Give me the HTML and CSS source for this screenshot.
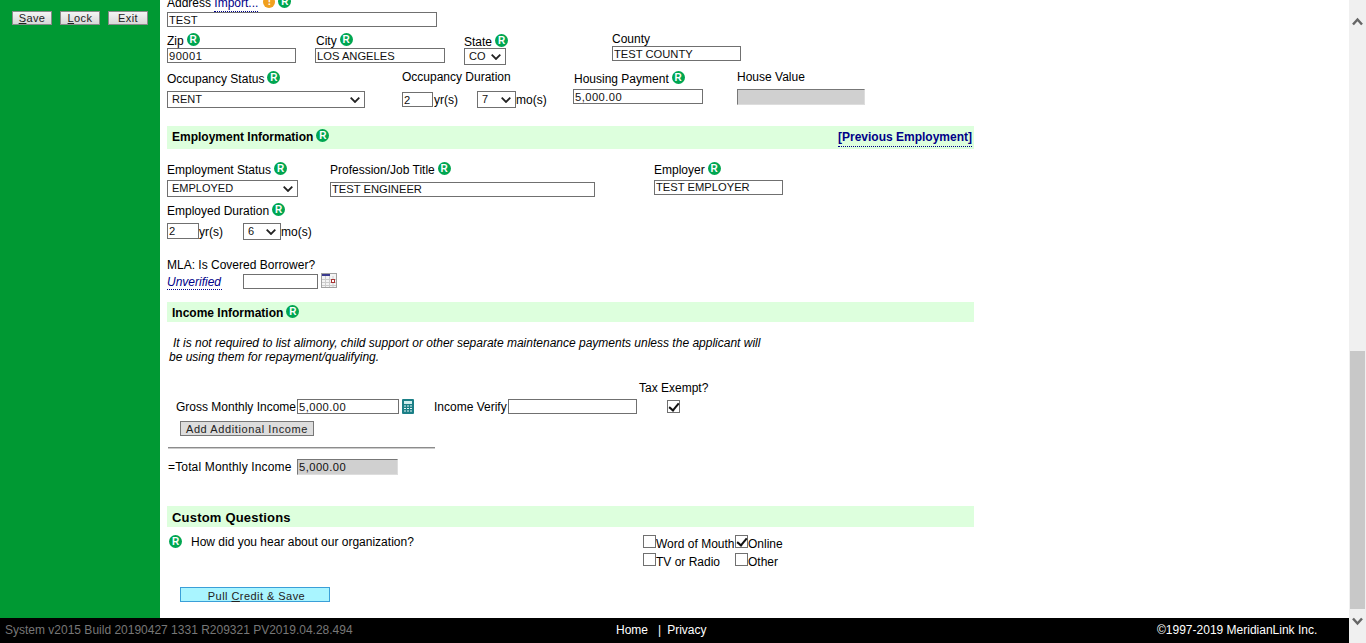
FILE: index.html
```html
<!DOCTYPE html>
<html>
	<head>
		<meta charset="UTF-8">
		<title>Application</title>
		<link rel="stylesheet" href="styles.css">
	</head>
	<body>
		<div class="app">
			<div class="page">
				<div class="main">

					<!--左侧按钮-->
					<div class="side">
						<button class="sideBtn"><u>S</u>ave</button>
						<button class="sideBtn"><u>L</u>ock</button>
						<button class="sideBtn">Exit</button>
					</div>

					<div class="content">

						<!--地址-->
						<div class="lbl addrLbl">Address <a class="lnk">Import...</a><span class="warn">!</span><span class="rq">R</span></div>
						<input class="txt addrInput" type="text" value="TEST">

						<div class="row rowCity">
							<div class="fld fldZip">
								<div class="lbl">Zip<span class="rq">R</span></div>
								<input class="txt num w129" type="text" value="90001">
							</div>
							<div class="fld fldCity">
								<div class="lbl">City<span class="rq">R</span></div>
								<input class="txt w130 nudgeL" type="text" value="LOS ANGELES">
							</div>
							<div class="fld fldState">
								<div class="lbl">State<span class="rq">R</span></div>
								<select class="sel w42"><option>CO</option></select>
							</div>
							<div class="fld">
								<div class="lbl">County</div>
								<input class="txt w129" type="text" value="TEST COUNTY">
							</div>
						</div>

						<div class="row rowHousing">
							<div class="fld fldOcc">
								<div class="lbl">Occupancy Status<span class="rq">R</span></div>
								<select class="sel w198 gapSel"><option>RENT</option></select>
							</div>
							<div class="fld fldDur">
								<div class="lbl">Occupancy Duration</div>
								<div class="dur durOcc">
									<input class="txt num w31" type="text" value="2">
									<span class="unit unitYr">yr(s)</span>
									<select class="sel w39"><option>7</option></select>
									<span class="unit">mo(s)</span>
								</div>
							</div>
							<div class="fld fldPay">
								<div class="lbl">Housing Payment<span class="rq">R</span></div>
								<input class="txt num w130 gapPay nudgeL" type="text" value="5,000.00">
							</div>
							<div class="fld">
								<div class="lbl">House Value</div>
								<input class="txt off w128 gapVal" type="text">
							</div>
						</div>

						<!--工作信息-->
						<div class="band bandEmp">
							<b>Employment Information<span class="rq">R</span></b>
							<a class="lnk lnkBold">[Previous Employment]</a>
						</div>

						<div class="row rowEmp">
							<div class="fld fldStatus">
								<div class="lbl">Employment Status<span class="rq">R</span></div>
								<select class="sel w131"><option>EMPLOYED</option></select>
							</div>
							<div class="fld fldJob">
								<div class="lbl">Profession/Job Title<span class="rq">R</span></div>
								<input class="txt w265 gapJob" type="text" value="TEST ENGINEER">
							</div>
							<div class="fld fldEmployer">
								<div class="lbl">Employer<span class="rq">R</span></div>
								<input class="txt w129" type="text" value="TEST EMPLOYER">
							</div>
						</div>

						<div class="lbl">Employed Duration<span class="rq">R</span></div>
						<div class="dur durEmp">
							<input class="txt num w32" type="text" value="2">
							<span class="unit unitYr2">yr(s)</span>
							<select class="sel w38"><option>6</option></select>
							<span class="unit">mo(s)</span>
						</div>

						<div class="lbl mlaLbl">MLA: Is Covered Borrower?</div>
						<div class="mla">
							<a class="lnk mlaLnk">Unverified</a>
							<input class="txt w75" type="text">
							<svg class="calIcon" width="16" height="15" viewBox="0 0 16 15">
								<rect x="0.5" y="0.5" width="15" height="14" fill="#f4f4f4" stroke="#a0a0a0"/>
								<rect x="1" y="1" width="8" height="2" fill="#3b3b8f"/>
								<path d="M1 6.500h14M1 9.500h14M1 12.500h14M4.500 3v11M8.500 3v11M12 3v11" stroke="#cccccc" fill="none"/>
								<rect x="10.500" y="6.500" width="3" height="3" fill="#fff" stroke="#a33"/>
							</svg>
						</div>

						<!--收入信息-->
						<div class="band bandInc">
							<b>Income Information<span class="rq">R</span></b>
						</div>
						<p class="note">It is not required to list alimony, child support or other separate maintenance payments unless the applicant will<br>be using them for repayment/qualifying.</p>
						<div class="lbl taxLbl">Tax Exempt?</div>

						<div class="grossRow">
							<span class="grossLbl">Gross Monthly Income</span>
							<input class="txt num w102" type="text" value="5,000.00">
							<svg class="calcIcon" width="12" height="15" viewBox="0 0 12 15">
								<rect width="12" height="15" rx="1" fill="#1b7f86"/>
								<rect x="2" y="2" width="8" height="3" fill="#cfeeee"/>
								<path d="M2 7h2M5 7h2M8 7h2M2 9.500h2M5 9.500h2M8 9.500h2M2 12h2M5 12h2M8 12h2" stroke="#e4f6f6" stroke-width="1.200"/>
							</svg>
							<span class="verifyLbl">Income Verify</span>
							<input class="txt w129" type="text">
							<input class="chk taxChk" type="checkbox" checked>
						</div>

						<button class="grayBtn">Add Additional Income</button>
						<div class="sumLine"></div>

						<div class="totalRow">
							<span class="totalLbl">=Total Monthly Income</span>
							<input class="txt num off w101" type="text" value="5,000.00">
						</div>

						<!--自定义问题-->
						<div class="band bandCustom">
							<b class="customTitle">Custom Questions</b>
						</div>

						<div class="question">
							<span class="rq rqFirst">R</span>
							<span class="qText">How did you hear about our organization?</span>
							<div class="answers">
								<label class="opt"><input class="chk" type="checkbox">Word of Mouth</label>
								<label class="opt"><input class="chk" type="checkbox" checked>Online</label>
								<label class="opt"><input class="chk" type="checkbox">TV or Radio</label>
								<label class="opt"><input class="chk" type="checkbox">Other</label>
							</div>
						</div>

						<button class="pullBtn">Pull <u>C</u>redit &amp; Save</button>
					</div>
				</div>

				<!--底部-->
				<div class="foot">
					<span class="build">System v2015 Build 20190427 1331 R209321 PV2019.04.28.494</span>
					<span class="footLinks"><a>Home</a><span class="bar">|</span><a>Privacy</a></span>
					<span class="copy">©1997-2019 MeridianLink Inc.</span>
				</div>
			</div>

			<!--滚动条-->
			<div class="scroll">
				<svg class="arrowUp" width="11" height="9" viewBox="0 0 11 9"><path d="M1 7.500l4.500-5 4.500 5" fill="none" stroke="#666" stroke-width="2.500"/></svg>
				<div class="thumb"></div>
				<svg class="arrowDown" width="11" height="9" viewBox="0 0 11 9"><path d="M1 1.500l4.500 5 4.500-5" fill="none" stroke="#666" stroke-width="2.500"/></svg>
			</div>
		</div>
	</body>
</html>
```

FILE: styles.css
```css
*{
	margin: 0;
	padding: 0;
	box-sizing: border-box;
}

body{
	overflow: hidden;
	background-color: #fff;
	color: #000;
	font: 12px/14px "Liberation Sans", Arial, sans-serif;
}

.app{
	display: flex;
	height: 643px;
}

.page{
	flex: 1;
	display: flex;
	flex-direction: column;
	min-width: 0;
}

.main{
	flex: 1;
	display: flex;
	min-height: 0;
}

/* 左侧 */
.side{
	width: 160px;
	background-color: #009933;
	display: flex;
	align-items: flex-start;
	gap: 8px;
	padding: 11px 12px 0;
}

.sideBtn{
	width: 40px;
	height: 14px;
	border: 1px solid #8a8a8a;
	background: linear-gradient(#f4f4f4, #d8d8d8);
	font: 11px/12px "Liberation Sans", Arial, sans-serif;
	letter-spacing: 0.4px;
	color: #222;
}

.content{
	flex: 1;
	overflow: hidden;
	padding-left: 7px;
}

/* 控件 */
.txt{
	display: block;
	height: 15px;
	border: 1px solid #707070;
	padding: 0 1px;
	background-color: #fff;
	color: #111;
	font: 11.200px/13px "Liberation Sans", Arial, sans-serif;
}

.num{
	letter-spacing: 0.45px;
}

.off{
	height: 16px;
	background-color: #d0d0d0;
	border-color: #777 #ddd #ddd #777;
}

.sel{
	appearance: none;
	-webkit-appearance: none;
	display: block;
	height: 17px;
	padding-left: 4px;
	border: 1px solid #707070;
	background: #fff url("data:image/svg+xml,%3Csvg xmlns='http://www.w3.org/2000/svg' width='10' height='6'%3E%3Cpath d='M.7.7 5 5 9.300.7' fill='none' stroke='%23222' stroke-width='1.800'/%3E%3C/svg%3E") no-repeat right 4px center;
	color: #111;
	font: 11px/15px "Liberation Sans", Arial, sans-serif;
}

.w31{ width: 31px; }
.w32{ width: 32px; height: 16px; }
.w38{ width: 38px; }
.w39{ width: 39px; }
.w42{ width: 42px; }
.w75{ width: 75px; }
.w101{ width: 101px; }
.w102{ width: 102px; }
.w128{ width: 128px; }
.w129{ width: 129px; }
.w130{ width: 130px; }
.w131{ width: 131px; }
.w198{ width: 198px; }
.w265{ width: 265px; }

.nudgeL{ margin-left: -1px; }

.lbl{
	height: 14px;
	white-space: nowrap;
}

/* 负的margin让图标不撑高行 */
.rq,
.warn{
	display: inline-block;
	width: 13px;
	height: 13px;
	border-radius: 50%;
	margin-top: -2px;
	margin-left: 3px;
	background-color: #00a651;
	color: #fff;
	font: bold 10px/13px "Liberation Sans", Arial, sans-serif;
	text-align: center;
	vertical-align: 2px;
}

.warn{
	width: 12px;
	height: 12px;
	margin-left: 5px;
	background-color: #f0a01e;
	line-height: 12px;
}

.lnk{
	color: #000088;
	padding-bottom: 1px;
	border-bottom: 1px dotted #000088;
}

.lnkBold{
	margin-top: 2px;
	font-weight: bold;
	padding-bottom: 2px;
}

/* 行 */
.row{
	display: flex;
	align-items: flex-start;
}

.addrLbl{
	margin-top: -4px;
}

.addrInput{
	width: 270px;
	margin-top: 2px;
}

.rowCity{
	height: 38px;
	margin-top: 5px;
}

.fldZip,
.fldCity{
	padding-top: 2px;
}

.fldState{
	padding-top: 3px;
}

.fldState .lbl{
	height: 13px;
}

.fldZip{ width: 149px; }
.fldCity{ width: 148px; }
.fldState{ width: 148px; }

.rowHousing{
	height: 56px;
}

.rowHousing .fldOcc,
.rowHousing .fldPay{
	padding-top: 2px;
}

.fldOcc{ width: 235px; }
.fldDur{ width: 172px; }
.fldPay{ width: 163px; }

.gapSel{ margin-top: 5px; }
.gapPay{ margin-top: 3px; }
.gapVal{ margin-top: 5px; }

.dur{
	display: flex;
	align-items: flex-start;
}

.durOcc{ margin-top: 7px; }

.durOcc .txt{ margin-top: 1px; }

.unit{
	padding-top: 2px;
	line-height: 14px;
}

.unitYr{ width: 44px; padding-left: 1px; }
.unitYr2{ width: 44px; }

/* 绿色标题 */
.band{
	width: 807px;
	display: flex;
	align-items: center;
	justify-content: space-between;
	padding: 0 2px 0 5px;
	background-color: #ddffdd;
	white-space: nowrap;
}

.bandEmp{ height: 23px; }
.bandInc{ height: 20px; margin-top: 13px; }
.bandCustom{ height: 21px; margin-top: 31px; }

.bandEmp b{ margin-top: -2px; }
.bandInc b,
.bandCustom b{ margin-top: 2px; }

.customTitle{
	font-size: 13px;
	letter-spacing: 0.2px;
}

.rowEmp{
	height: 42px;
	margin-top: 13px;
}

.rowEmp .txt{
	padding-bottom: 2px;
}

.fldStatus{
	width: 163px;
	padding-top: 1px;
}

.fldJob{
	width: 324px;
	padding-top: 1px;
}

.fldEmployer{
	padding-top: 1px;
}

.fldStatus .sel{ margin-top: 3px; }
.gapJob{ margin-top: 5px; }
.fldEmployer .txt{ margin-top: 3px; }

.durEmp{
	margin-top: 5px;
}

.mlaLbl{
	margin-top: 18px;
}

.mla{
	display: flex;
	align-items: flex-start;
	height: 15px;
	margin-top: 2px;
}

.mlaLnk{
	width: 55px;
	height: 15px;
	margin-right: 21px;
	margin-top: 1px;
	font-style: italic;
}

.calIcon{
	margin: -1px 0 0 3px;
}

/* 收入 */
.note{
	margin-top: 14px;
	padding-left: 2px;
	text-indent: 4px;
	font-style: italic;
	white-space: nowrap;
}

.taxLbl{
	margin: 17px 0 0 472px;
}

.grossRow{
	display: flex;
	align-items: center;
	height: 15px;
	margin-top: 4px;
	padding-left: 9px;
}

.grossLbl{ width: 121px; }

.calcIcon{ margin-left: 3px; }

.verifyLbl{
	width: 74px;
	margin-left: 20px;
}

.chk{
	appearance: none;
	-webkit-appearance: none;
	display: block;
	position: relative;
	flex: none;
	width: 13px;
	height: 13px;
	border: 1px solid #707070;
	background-color: #fff;
}

/* 勾选标记 */
.chk:checked::after{
	content: "";
	position: absolute;
	left: 3px;
	top: 0;
	width: 4px;
	height: 8px;
	border: solid #111;
	border-width: 0 2px 2px 0;
	transform: rotate(40deg);
}

.taxChk{ margin-left: 30px; }

.grayBtn{
	display: block;
	width: 134px;
	height: 15px;
	margin: 7px 0 0 13px;
	padding-top: 1px;
	border: 1px solid #777;
	background-color: #ddd;
	color: #222;
	font: 11px/13px "Liberation Sans", Arial, sans-serif;
	letter-spacing: 0.6px;
}

.sumLine{
	width: 267px;
	height: 2px;
	margin: 11px 0 0 1px;
	background-color: #8c8c8c;
	border-bottom: 1px solid #ccc;
}

.totalRow{
	display: flex;
	align-items: center;
	height: 16px;
	margin-top: 10px;
}

.totalLbl{
	width: 130px;
	padding-left: 1px;
	letter-spacing: 0.15px;
}

/* 问题 */
.question{
	display: flex;
	align-items: flex-start;
	height: 36px;
	margin-top: 8px;
}

.rqFirst{
	flex: none;
	margin: 0 0 0 2px;
}

.qText{
	width: 452px;
	margin-left: 9px;
}

.answers{
	display: grid;
	grid-template-columns: 92px 92px;
	grid-auto-rows: 18px;
}

.opt{
	display: flex;
	align-items: flex-start;
	white-space: nowrap;
	line-height: 18px;
}

.pullBtn{
	display: block;
	width: 150px;
	height: 15px;
	margin: 16px 0 0 13px;
	padding: 2px 0 0 3px;
	border: 1px solid #3a9fd8;
	background-color: #a9f5ff;
	color: #222;
	font: 11px/13px "Liberation Sans", Arial, sans-serif;
	letter-spacing: 0.45px;
}

/* 底部 */
.foot{
	flex: none;
	display: flex;
	align-items: center;
	height: 25px;
	padding: 0 0 2px 5px;
	background-color: #000;
	color: #fff;
}

.build{
	width: 611px;
	color: #777;
	white-space: nowrap;
}

.footLinks{
	width: 541px;
	white-space: nowrap;
}

.bar{
	margin: 0 6px 0 10px;
}

.copy{
	white-space: nowrap;
}

/* 滚动条 */
.scroll{
	flex: none;
	width: 17px;
	display: flex;
	flex-direction: column;
	align-items: center;
	padding-top: 17px;
	background-color: #f0f0f0;
}

.arrowUp{ flex: none; }

.thumb{
	flex: none;
	width: 15px;
	height: 258px;
	margin-top: 325px;
	background-color: #c8c8c8;
}

.arrowDown{
	flex: none;
	margin-top: 8px;
}
```
